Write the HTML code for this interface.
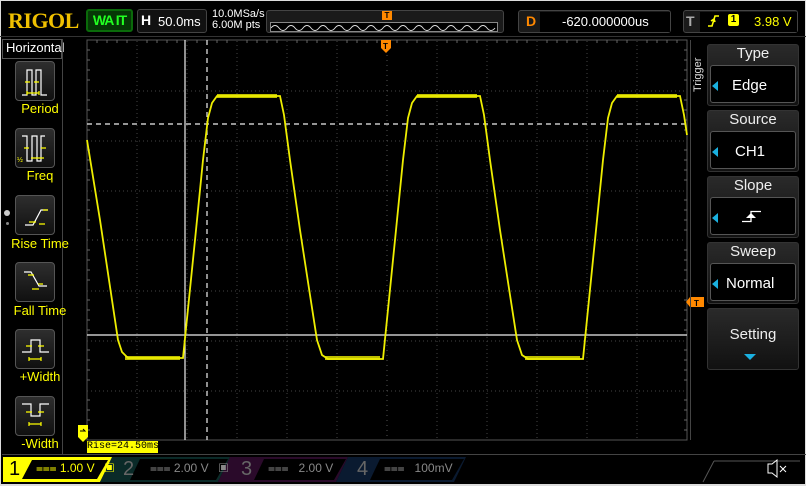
<!DOCTYPE html>
<html><head><meta charset="utf-8"><style>
*{margin:0;padding:0;box-sizing:border-box}
body{width:806px;height:486px;background:#000;overflow:hidden;position:relative;font-family:"Liberation Sans",sans-serif;color:#fff}
.a{position:absolute}
.btn{position:absolute;left:15px;width:40px;height:40px;border:1px solid #555;border-radius:4px;background:linear-gradient(#2e2e2e,#101010)}
.lbl{position:absolute;left:0;width:80px;text-align:center;color:#ff0;font-size:13px}
.rb{position:absolute;left:707px;width:92px;border:1px solid #333;border-radius:3px;background:linear-gradient(#2a2a2a,#111)}
.rt{position:absolute;left:707px;width:92px;text-align:center;font-size:15px;color:#eee}
.rin{position:absolute;left:710px;width:86px;height:38px;border:1px solid #555;border-radius:3px;background:#000}
.tri{position:absolute;width:0;height:0;border-top:5px solid transparent;border-bottom:5px solid transparent;border-right:6px solid #1ab0e0}
</style></head><body>
<div class="a" style="left:0;top:0;width:806px;height:486px;border:1px solid #ddd;border-bottom-width:2px"></div>
<!-- top bar -->
<div class="a" style="left:8px;top:8px;font-family:'Liberation Serif',serif;font-weight:bold;font-size:22px;color:#f0c000;letter-spacing:-0.5px">RIGOL</div>
<div class="a" style="left:86px;top:9px;width:47px;height:23px;border:2px solid #0a6a0a;border-radius:3px;background:#063806;color:#2f2;font-weight:bold;font-size:14px;text-align:center;line-height:19px;letter-spacing:-1px">WA IT</div>
<div class="a" style="left:137px;top:9px;width:70px;height:24px;border:1px solid #444;border-radius:3px;background:#111"></div>
<div class="a" style="left:141px;top:12px;font-weight:bold;font-size:14px">H</div>
<div class="a" style="left:158px;top:14px;font-size:13px">50.0ms</div>
<div class="a" style="left:212px;top:9px;font-size:11px;line-height:11px">10.0MSa/s<br>6.00M pts</div>
<div class="a" style="left:266px;top:10px;width:238px;height:23px;border:1px solid #444;border-radius:3px;background:#1a1a1a"></div>
<div class="a" style="left:270px;top:22px;width:228px;height:10px;border:1px solid #888;background:#000"></div>
<svg class="a" style="left:271px;top:22px" width="226" height="10"><path d="M0 6 q4 -5 8 0 t8 0 t8 0 t8 0 t8 0 t8 0 t8 0 t8 0 t8 0 t8 0 t8 0 t8 0 t8 0 t8 0 t8 0 t8 0 t8 0 t8 0 t8 0 t8 0 t8 0 t8 0 t8 0 t8 0 t8 0 t8 0 t8 0 t8 0" stroke="#ddd" fill="none" stroke-width="1"/></svg>
<div class="a" style="left:382px;top:11px;width:10px;height:9px;background:#f80;color:#000;font-size:8px;font-weight:bold;text-align:center;line-height:9px">T</div>
<div class="a" style="left:518px;top:10px;width:153px;height:23px;border:1px solid #444;border-radius:3px;background:#1a1a1a"></div>
<div class="a" style="left:540px;top:12px;width:130px;height:20px;background:#000"></div>
<div class="a" style="left:526px;top:13px;font-weight:bold;font-size:14px;color:#f80">D</div>
<div class="a" style="left:562px;top:14px;font-size:13px">-620.000000us</div>
<div class="a" style="left:683px;top:10px;width:115px;height:23px;border:1px solid #444;border-radius:3px;background:#1a1a1a"></div>
<div class="a" style="left:700px;top:12px;width:97px;height:20px;background:#000"></div>
<div class="a" style="left:686px;top:13px;font-weight:bold;font-size:14px;color:#aaa">T</div>
<svg class="a" style="left:706px;top:13px" width="14" height="16"><path d="M2 13h4l3-10h4M5 8l3-2l1 3" stroke="#ff0" fill="none" stroke-width="1.6"/></svg>
<div class="a" style="left:728px;top:14px;width:11px;height:12px;background:#ff0;border-radius:2px;color:#000;font-size:10px;font-weight:bold;text-align:center;line-height:12px">1</div>
<div class="a" style="left:754px;top:14px;font-size:13px;color:#ff0">3.98 V</div>
<div class="a" style="left:0;top:36px;width:806px;height:1px;background:#333"></div>
<!-- left panel -->
<div class="a" style="left:2px;top:39px;width:60px;height:20px;border:1px solid #555;font-size:13px;padding-left:3px">Horizontal</div>
<div class="a" style="left:62px;top:39px;width:1px;height:415px;background:#444"></div>
<div class="btn" style="top:61px"></div><div class="lbl" style="top:101px">Period</div>
<div class="btn" style="top:128px"></div><div class="lbl" style="top:168px">Freq</div>
<div class="btn" style="top:195px"></div><div class="lbl" style="top:236px">Rise Time</div>
<div class="btn" style="top:262px"></div><div class="lbl" style="top:303px">Fall Time</div>
<div class="btn" style="top:329px"></div><div class="lbl" style="top:369px">+Width</div>
<div class="btn" style="top:396px"></div><div class="lbl" style="top:436px">-Width</div>
<div class="a" style="left:4px;top:210px;width:6px;height:6px;border-radius:3px;background:#ccc"></div>
<div class="a" style="left:6px;top:222px;width:3px;height:3px;border-radius:2px;background:#888"></div>
<svg class="a" style="left:0;top:0" width="62" height="450" fill="none" stroke-width="1.2">
<path d="M22 95h5v-25h5v25h4v-25h5v25h6" stroke="#fff"/><path d="M25 82h5M34 82h5" stroke="#ff0"/><path d="M27 93h12M27 91v4M39 91v4" stroke="#ff0"/>
<path d="M22 136h5v25h5v-25h5v25h4v-25h4" stroke="#fff"/><path d="M24 148h5M41 148h5M31 158h13" stroke="#ff0"/><text x="17" y="162" fill="#ff0" font-size="7">½</text>
<path d="M25 225h8l8-15h7" stroke="#fff"/><path d="M29 222h7M39 224h6M43 210h5" stroke="#ff0"/>
<path d="M24 272h7l8 14h8" stroke="#fff"/><path d="M28 275h6M32 289h7M38 284h5" stroke="#ff0"/>
<path d="M22 352h9v-12h9v12h9" stroke="#fff"/><path d="M26 346h6M38 346h6M29 359h12M29 357v4M41 357v4" stroke="#ff0"/>
<path d="M22 404h9v12h9v-12h9" stroke="#fff"/><path d="M26 412h6M38 412h6M29 424h12M29 422v4M41 422v4" stroke="#ff0"/>
</svg>
<!-- scope area -->
<svg class="a" style="left:0;top:0" width="806" height="486">
<rect x="87" y="40" width="600" height="400" fill="none" stroke="#555"/>
<g stroke="#444" stroke-dasharray="1 3">
<path d="M137 41V440M187 41V440M237 41V440M287 41V440M337 41V440M437 41V440M487 41V440M537 41V440M587 41V440M637 41V440"/>
<path d="M87 91H687M87 141H687M87 191H687M87 291H687M87 341H687M87 391H687"/>
</g>
<path d="M87 240H687M387 40V440" stroke="#555" stroke-dasharray="1 4"/>
<g stroke="#666"><path d="M87 50h3M87 60h3M87 70h3M87 80h3M87 100h3M87 110h3M87 120h3M87 130h3M87 150h3M87 160h3M87 170h3M87 180h3M87 200h3M87 210h3M87 220h3M87 230h3M87 250h3M87 260h3M87 270h3M87 280h3M87 300h3M87 310h3M87 320h3M87 330h3M87 350h3M87 360h3M87 370h3M87 380h3M87 400h3M87 410h3M87 420h3M87 430h3"/>
<path d="M687 50h-3M687 60h-3M687 70h-3M687 80h-3M687 100h-3M687 110h-3M687 120h-3M687 130h-3M687 150h-3M687 160h-3M687 170h-3M687 180h-3M687 200h-3M687 210h-3M687 220h-3M687 230h-3M687 250h-3M687 260h-3M687 270h-3M687 280h-3M687 300h-3M687 310h-3M687 320h-3M687 330h-3M687 350h-3M687 360h-3M687 370h-3M687 380h-3M687 400h-3M687 410h-3M687 420h-3M687 430h-3"/>
<path d="M97 40v3M107 40v3M117 40v3M127 40v3M147 40v3M157 40v3M167 40v3M177 40v3M197 40v3M217 40v3M227 40v3M247 40v3M257 40v3M267 40v3M277 40v3M297 40v3M307 40v3M317 40v3M327 40v3M347 40v3M357 40v3M367 40v3M377 40v3M397 40v3M407 40v3M417 40v3M427 40v3M447 40v3M457 40v3M467 40v3M477 40v3M497 40v3M507 40v3M517 40v3M527 40v3M547 40v3M557 40v3M567 40v3M577 40v3M597 40v3M607 40v3M617 40v3M627 40v3M647 40v3M657 40v3M667 40v3M677 40v3"/></g>
<path d="M87 124H687" stroke="#eee" stroke-dasharray="5 4" stroke-width="1.2"/>
<path d="M87 335H687" stroke="#eee" stroke-width="1.2"/>
<path d="M185 40V440" stroke="#eee" stroke-width="1.2"/>
<path d="M207 40V440" stroke="#eee" stroke-dasharray="5 4" stroke-width="1.2"/>
<g fill="none" stroke="#ee0" stroke-width="1.8">
<path d="M87 140L100 220L112 300L118 340L122 352L128 358H183L195 240L203 160L208 118L212 103L217 96H280L284 115L290 160L300 230L310 295L317 340L322 355L328 359H383L395 240L403 160L408 118L412 103L417 96H480L484 115L490 160L500 230L510 295L517 340L522 355L528 359H583L595 240L603 160L608 118L612 103L617 96H680L684 115L687 135"/>
</g>
<g fill="#ee0" opacity="0.8"><rect x="125" y="356" width="55" height="4"/><rect x="325" y="356" width="55" height="4"/><rect x="525" y="356" width="55" height="4"/><rect x="217" y="94" width="60" height="4"/><rect x="417" y="94" width="60" height="4"/><rect x="617" y="94" width="60" height="4"/></g>
<path d="M381 40h10v8l-5 5l-5-5z" fill="#f80"/><text x="383" y="49" font-size="8" font-weight="bold" fill="#000" font-family="Liberation Sans">T</text>
<path d="M690 297h14v10h-14l-4-5z" fill="#f80"/><text x="694" y="306" font-size="8" font-weight="bold" fill="#000" font-family="Liberation Sans">T</text>
<path d="M78 425h10v12l-5 5l-5-5z" fill="#ff0"/><path d="M80 431h5l-2-2" stroke="#000" fill="none"/>
</svg>
<div class="a" style="left:87px;top:441px;width:71px;height:12px;background:#ff0;color:#000;font-family:'Liberation Mono',monospace;font-size:10px;line-height:12px">Rise=24.50ms</div>
<!-- right panel -->
<div class="a" style="left:690px;top:40px;width:1px;height:400px;background:#444"></div>
<div class="a" style="left:692px;font-size:11px;transform:rotate(-90deg);transform-origin:left top;top:92px;color:#ddd">Trigger</div>
<div class="rb" style="top:44px;height:62px"></div><div class="rt" style="top:45px">Type</div><div class="rin" style="top:65px"></div><div class="tri" style="left:712px;top:81px"></div><div class="a" style="left:732px;top:77px;font-size:15px">Edge</div>
<div class="rb" style="top:110px;height:62px"></div><div class="rt" style="top:111px">Source</div><div class="rin" style="top:131px"></div><div class="tri" style="left:712px;top:147px"></div><div class="a" style="left:735px;top:143px;font-size:15px">CH1</div>
<div class="rb" style="top:176px;height:62px"></div><div class="rt" style="top:177px">Slope</div><div class="rin" style="top:197px"></div><div class="tri" style="left:712px;top:213px"></div>
<svg class="a" style="left:740px;top:208px" width="24" height="16"><path d="M2 13.5h9v-10h10" stroke="#fff" fill="none" stroke-width="1.3"/><path d="M6 10h10l-5-5z" fill="#fff"/></svg>
<div class="rb" style="top:242px;height:62px"></div><div class="rt" style="top:243px">Sweep</div><div class="rin" style="top:263px"></div><div class="tri" style="left:712px;top:279px"></div><div class="a" style="left:726px;top:275px;font-size:15px">Normal</div>
<div class="rb" style="top:308px;height:62px"></div><div class="rt" style="top:326px">Setting</div>
<div class="a" style="left:744px;top:354px;border-left:6px solid transparent;border-right:6px solid transparent;border-top:6px solid #1ab0e0"></div>
<!-- bottom bar -->
<div class="a" style="left:2px;top:454px;width:804px;height:1px;background:#444"></div>
<svg class="a" style="left:0;top:454px" width="806" height="32">
<path d="M3 3H113L100 28H3z" fill="#ff0"/>
<path d="M32 6H108L97 25H22z" fill="#000"/>
<path d="M112 3H230L218 28H100z" fill="#0a2a28"/><path d="M140 5H228L216 26H130z" fill="#000"/>
<path d="M230 3H348L336 28H218z" fill="#2a0a2a"/><path d="M264 5H346L334 26H254z" fill="#000"/>
<path d="M348 3H466L454 28H336z" fill="#0a1a30"/><path d="M380 5H464L452 26H370z" fill="#000"/>
<path d="M714 7H800M714 7L703 28" stroke="#555" fill="none"/>
<path d="M768 10h4l5-4v17l-5-4h-4z" stroke="#fff" fill="none"/><path d="M780 12l6 6M786 12l-6 6" stroke="#fff"/>
</svg>
<div class="a" style="left:9px;top:458px;font-size:20px;color:#000">1</div>
<div class="a" style="left:36px;top:461px;font-size:12px;color:#ff0">⩶ 1.00 V &nbsp;&nbsp;▣</div>
<div class="a" style="left:123px;top:458px;font-size:20px;color:#666">2</div>
<div class="a" style="left:150px;top:461px;font-size:12px;color:#888">⩶ 2.00 V &nbsp;&nbsp;▣</div>
<div class="a" style="left:241px;top:458px;font-size:20px;color:#666">3</div>
<div class="a" style="left:268px;top:461px;font-size:12px;color:#888">⩶ &nbsp; 2.00 V</div>
<div class="a" style="left:357px;top:458px;font-size:20px;color:#666">4</div>
<div class="a" style="left:384px;top:461px;font-size:12px;color:#888">⩶ &nbsp;&nbsp;100mV</div>
</body></html>
